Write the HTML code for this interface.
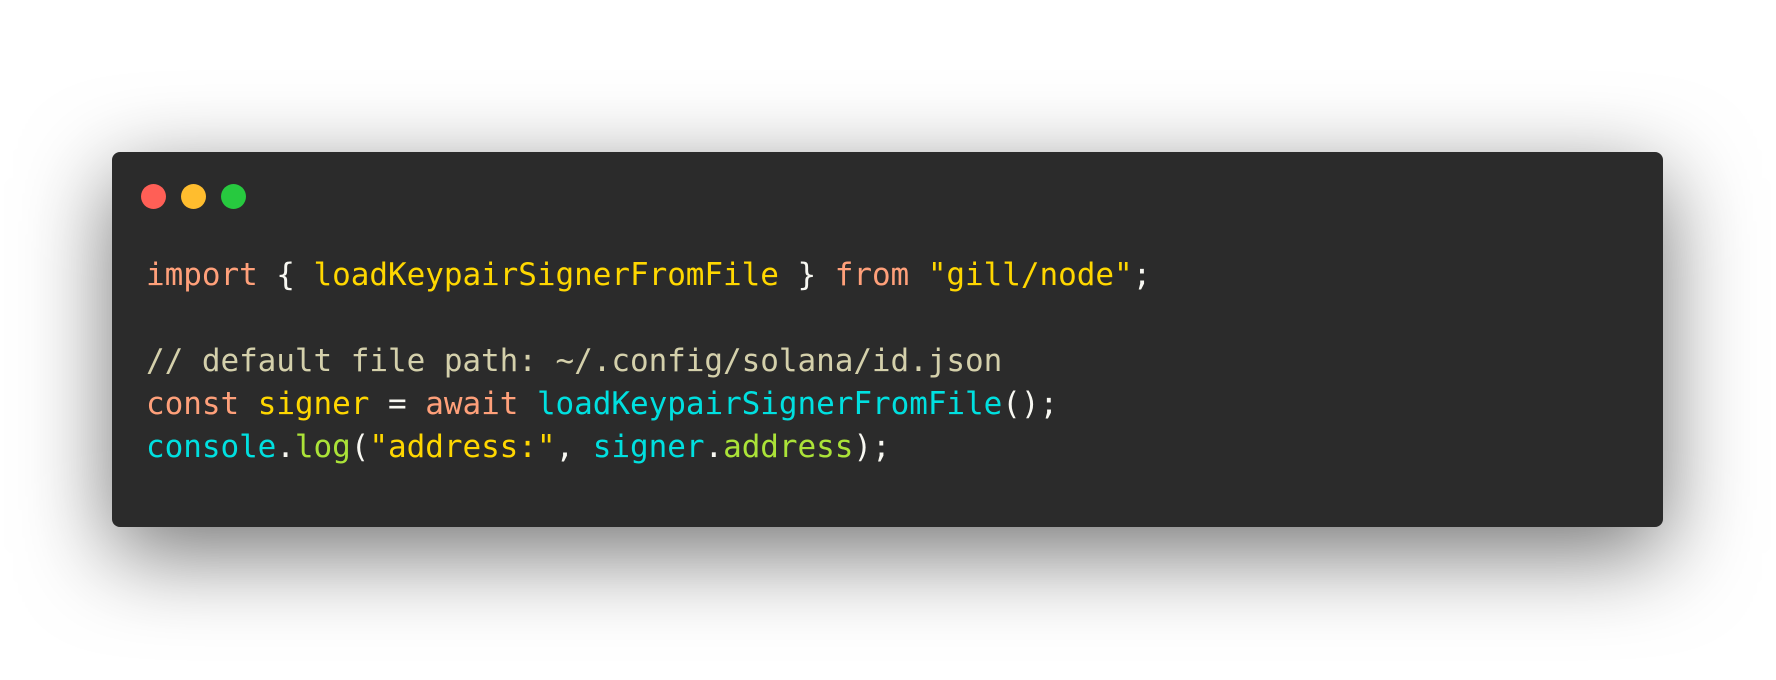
<!DOCTYPE html>
<html><head><meta charset="utf-8"><style>
html,body{margin:0;padding:0;width:1776px;height:680px;background:#fff;overflow:hidden}
.win{position:absolute;left:112px;top:152px;width:1551px;height:375px;background:#2b2b2b;border-radius:8px;box-shadow:0 26px 90px rgba(0,0,0,0.55)}
.dot{position:absolute;top:184px;width:25px;height:25px;border-radius:50%}
pre{position:absolute;left:146px;top:254px;margin:0;font-family:"DejaVu Sans Mono","Liberation Mono",monospace;font-size:31px;line-height:43px;letter-spacing:-0.05px;color:#f8f8f2}
.k{color:#ffa07a}.y{color:#ffd700}.c{color:#00e0e0}.g{color:#abe338}.m{color:#d4d0ab}
</style></head><body>
<div class="win"></div>
<div class="dot" style="left:141px;background:#ff5f56"></div>
<div class="dot" style="left:181px;background:#ffbd2e"></div>
<div class="dot" style="left:221px;background:#27c93f"></div>
<pre><span class="k">import</span> { <span class="y">loadKeypairSignerFromFile</span> } <span class="k">from</span> <span class="y">"gill/node"</span>;

<span class="m">// default file path: ~/.config/solana/id.json</span>
<span class="k">const</span> <span class="y">signer</span> = <span class="k">await</span> <span class="c">loadKeypairSignerFromFile</span>();
<span class="c">console</span>.<span class="g">log</span>(<span class="y">"address:"</span>, <span class="c">signer</span>.<span class="g">address</span>);</pre>
</body></html>
